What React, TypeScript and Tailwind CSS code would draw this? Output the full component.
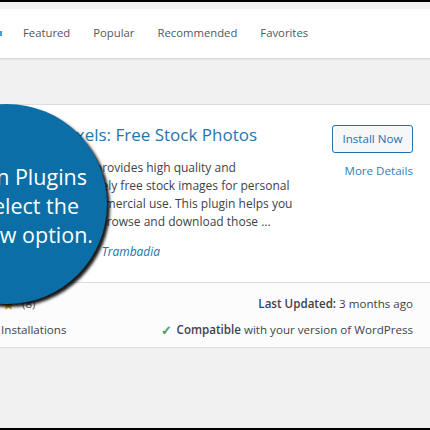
import React from "react";

const tabs = ["Featured", "Popular", "Recommended", "Favorites"];

const descLines = [
  "Pexels provides high quality and",
  "completely free stock images for personal",
  "and commercial use. This plugin helps you",
  "search, browse and download those ...",
];

const Star = () => (
  <svg viewBox="0 0 20 20" className="h-[13px] w-[13px] fill-[#dba617]">
    <path d="M10 1.5l2.6 5.6 6 .7-4.5 4.1 1.2 6-5.3-3-5.3 3 1.2-6L1.4 7.8l6-.7z" />
  </svg>
);

export default function App() {
  return (
    <div
      className="relative w-[430px] h-[430px] overflow-hidden bg-[#f1f1f1] border-y-2 border-black"
      style={{ fontFamily: '"Open Sans", "Noto Sans", sans-serif' }}
    >
      {/* filter tabs */}
      <div className="mt-[7px] h-[50px] bg-white border-b border-[#d6d8da] shadow-[0_1px_1px_rgba(0,0,0,0.04)] flex items-center text-[11.3px] text-[#50575e]">
        <span className="self-center w-[2px] h-[5px] bg-[#3f9fd6]" />
        <div className="flex gap-[23px] pl-[21px]">
          {tabs.map((t) => (
            <span key={t}>{t}</span>
          ))}
        </div>
      </div>

      {/* plugin card */}
      <div className="mt-[45px] bg-white border-y border-[#dcdcde]">
        <div className="h-[177px] flex pl-[56px] pr-[17px] pt-[18px]">
          <div className="flex-1 flex flex-col">
            <div className="text-[17px] leading-[24px] text-[#1f76ad] whitespace-nowrap">
              Pexels: Free Stock Photos
            </div>
            <div className="mt-[12px] text-[12px] leading-[18px] text-[#3c434a] whitespace-nowrap">
              {descLines.map((l) => (
                <div key={l}>{l}</div>
              ))}
            </div>
            <div className="mt-[12px] text-[12px] italic leading-[18px] text-[#50575e] whitespace-nowrap">
              By <span className="text-[#2271b1]">Raju&nbsp; Trambadia</span>
            </div>
          </div>
          <div className="flex flex-col items-end">
            <button className="mt-[2px] h-[28px] w-[81px] rounded-[3px] border border-[#2271b1] bg-[#f6f7f7] text-[11.6px] text-[#2271b1]">
              Install Now
            </button>
            <span className="mt-[9px] text-[11.6px] text-[#2f80b8]">More Details</span>
          </div>
        </div>
        <div className="h-[65px] border-t border-[#dcdcde] bg-[#fcfcfc] flex justify-between pr-[17px] pt-[8px] text-[11.6px] leading-[26px] text-[#3c434a] whitespace-nowrap">
          <div className="flex flex-col">
            <div className="flex items-center gap-[1px] ml-[-54px]">
              <Star />
              <Star />
              <Star />
              <Star />
              <Star />
              <span className="ml-[6px] text-[#50575e]">(8)</span>
            </div>
            <div className="ml-[-80px]">10,000+ Active Installations</div>
          </div>
          <div className="flex flex-col items-end">
            <div>
              <span className="font-semibold">Last Updated:</span> 3 months ago
            </div>
            <div className="flex items-center gap-[5px]">
              <span className="text-[#46a058] font-bold text-[13px]">✓</span>
              <span>
                <span className="font-semibold">Compatible</span> with your version of WordPress
              </span>
            </div>
          </div>
        </div>
      </div>

      {/* callout bubble */}
      <div className="absolute left-[-93px] top-[102px] w-[200px] h-[200px] rounded-full bg-[#0b6ea6] shadow-[3px_3px_3px_rgba(0,0,0,0.9)] flex flex-col items-end justify-center pt-[2px] text-white text-[21.5px] leading-[29px] whitespace-nowrap">
        <div className="mr-[20px]">Go to Add New in Plugins</div>
        <div className="mr-[28px]">and then select the</div>
        <div className="mr-[14px]">Add New option.</div>
      </div>
    </div>
  );
}
